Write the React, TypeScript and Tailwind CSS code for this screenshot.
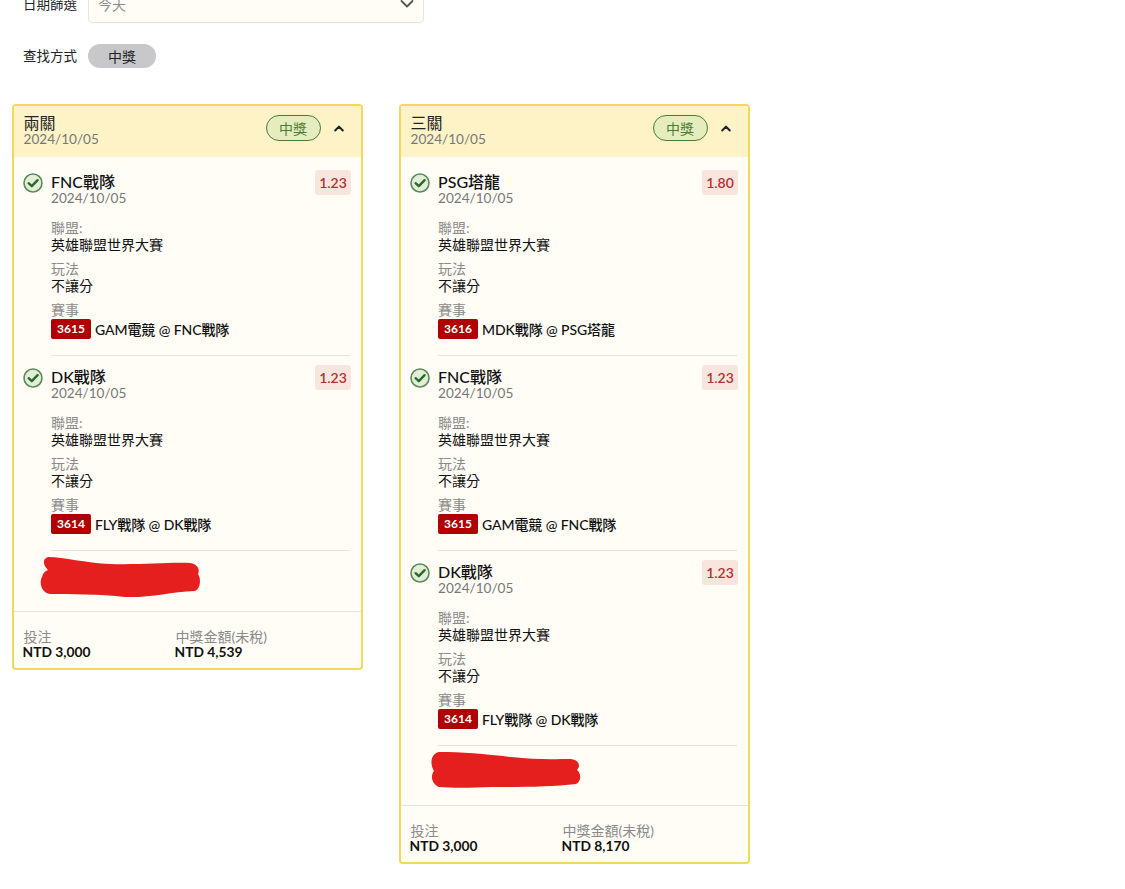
function Check() {
  return (
    <svg width="20" height="20" viewBox="0 0 20 20" className="shrink-0">
      <circle cx="10" cy="10" r="9" fill="#e3eed9" stroke="#5b8a58" strokeWidth="1.6" />
      <path d="M5.6 10.2 L8.8 13.2 L14.6 7.2" fill="none" stroke="#2c6a2c" strokeWidth="2.4" strokeLinecap="round" strokeLinejoin="round" />
    </svg>
  );
}

function Info({ label, value }: { label: string; value: string }) {
  return (
    <div className="mb-[7px]">
      <div className="text-[14px] leading-[17px] text-[#8a8a8a]">{label}</div>
      <div className="text-[14px] leading-[17px] text-[#111]">{value}</div>
    </div>
  );
}

type Sel = { name: string; odds: string; id: string; match: string };

function Row({ s }: { s: Sel }) {
  return (
    <div className="border-b border-[#e6e4dc] ml-[37px] mr-[11px] h-[195px] relative">
      <div className="absolute left-[-28px] top-[12px]"><Check /></div>
      <div className="pt-[12px]">
        <div className="flex justify-between mr-[-1.5px]">
          <div>
            <div className="text-[16px] leading-[17px] font-medium text-[#111]">{s.name}</div>
            <div className="text-[13.6px] leading-[16px] text-[#777]">2024/10/05</div>
          </div>
          <div className="w-[36px] h-[25px] rounded-[3px] bg-[#f8e6de] text-[#b3312f] text-[14px] font-semibold flex items-center justify-center mt-[-3px]">{s.odds}</div>
        </div>
        <div className="mt-[13px]">
          <Info label="聯盟:" value="英雄聯盟世界大賽" />
          <Info label="玩法" value="不讓分" />
          <div className="text-[14px] leading-[17px] text-[#8a8a8a]">賽事</div>
          <div className="flex items-center gap-[4px] h-[20px] mt-[1px]">
            <span className="w-[40px] h-[20px] rounded-[2px] bg-[#b00000] text-white text-[12px] font-bold flex items-center justify-center">{s.id}</span>
            <span className="text-[14px] font-medium text-[#111] tracking-[-0.1px]">{s.match}</span>
          </div>
        </div>
      </div>
    </div>
  );
}

function Card({ title, rows, amount, scribble, scribbleClass, sectionClass }: { title: string; rows: Sel[]; amount: string; scribble: string; scribbleClass: string; sectionClass: string }) {
  return (
    <div className="w-[350.5px] border-2 border-[#f2d95c] rounded-[4px] bg-[#fffdf6]">
      <div className="h-[51px] bg-[#fdf3c7] pl-[9.5px] pr-[14px] flex justify-between">
        <div className="pt-[8px]">
          <div className="text-[16px] leading-[17px] text-[#222]">{title}</div>
          <div className="text-[13.6px] leading-[16px] text-[#777]">2024/10/05</div>
        </div>
        <div className="flex items-start gap-[12px] pt-[9px]">
          <div className="w-[55px] h-[26px] rounded-full border border-[#4c7c34] bg-[#e5ecbe] text-[#4c7c34] text-[14px] flex items-center justify-center">中獎</div>
          <svg width="12" height="26" viewBox="0 0 12 26" className="mr-[2px]">
            <path d="M2.2 15.5 L6 11.6 L9.8 15.5" fill="none" stroke="#222" strokeWidth="2" strokeLinecap="round" strokeLinejoin="round" />
          </svg>
        </div>
      </div>
      <div className="pt-[4px]">
        {rows.map((r) => <Row key={r.id} s={r} />)}
      </div>
      <div className={sectionClass}>
        <svg width="162" height="42" viewBox="0 0 162 42" className={scribbleClass}>
          <path d={scribble} fill="#e51e1e" />
        </svg>
      </div>
      <div className="h-[56px] pl-[9.5px] pt-[17px] flex">
        <div className="w-[152px]">
          <div className="text-[14px] leading-[15px] text-[#8a8a8a]">投注</div>
          <div className="text-[13.8px] leading-[15px] font-bold text-[#111] ml-[-1px]">NTD 3,000</div>
        </div>
        <div>
          <div className="text-[14px] leading-[15px] text-[#8a8a8a]">中獎金額(未稅)</div>
          <div className="text-[13.8px] leading-[15px] font-bold text-[#111] ml-[-1px]">{amount}</div>
        </div>
      </div>
    </div>
  );
}

const FNC = { name: "FNC戰隊", odds: "1.23", id: "3615", match: "GAM電競 @ FNC戰隊" };
const DK = { name: "DK戰隊", odds: "1.23", id: "3614", match: "FLY戰隊 @ DK戰隊" };
const PSG = { name: "PSG塔龍", odds: "1.80", id: "3616", match: "MDK戰隊 @ PSG塔龍" };

const S1 = "M8 1 C24 1 45 7 70 8 C100 9 130 6 150 7 C158 8 160 14 158 18 C161 22 161 32 155 35 C130 36 110 42 85 41 C60 38 30 38 10 38 C1 37 -1 26 2 21 C3 17 5 15 8 14 C3 9 2 3 8 1 Z";
const S2 = "M8 1 C30 1 55 3 80 6 C105 9 125 8 140 8 C148 9 150 15 146 19 C150 22 151 30 145 33 C120 36 90 36 60 36 C40 37 20 37 8 36 C1 33 -1 25 3 20 C-1 14 -1 3 8 1 Z";

export default function App() {
  return (
    <div className="min-h-[889px] bg-white text-[#222] font-['Lato','Noto_Sans_CJK_TC',sans-serif]">
      <div className="flex items-center mt-[-15px] pl-[23px] relative">
        <span className="w-[65px] text-[13.5px]">日期篩選</span>
        <div className="w-[336px] h-[38px] border border-[#e8e6dc] rounded-[4px] bg-[#fffdf6] flex items-center justify-between pl-[9px] pr-[8px] text-[14px] text-[#8a8a8a]">
          今天
          <svg width="16" height="16" viewBox="0 0 16 16">
            <path d="M2.5 5 L8 10.5 L13.5 5" fill="none" stroke="#555" strokeWidth="1.8" strokeLinecap="round" strokeLinejoin="round" />
          </svg>
        </div>
      </div>
      <div className="flex items-center mt-[21px] pl-[23px]">
        <span className="w-[65px] text-[13.5px]">查找方式</span>
        <div className="w-[68px] h-[24px] rounded-full bg-[#c8c8ca] text-[14px] flex items-center justify-center">中獎</div>
      </div>
      <div className="flex items-start gap-[36.5px] pl-[12px] mt-[36px]">
        <Card title="兩關" rows={[FNC, DK]} amount="NTD 4,539" scribble={S1} scribbleClass="ml-[26px]" sectionClass="h-[61px] border-b border-[#e6e4dc] pt-[5px]" />
        <Card title="三關" rows={[PSG, FNC, DK]} amount="NTD 8,170" scribble={S2} scribbleClass="ml-[30px]" sectionClass="h-[60px] border-b border-[#e6e4dc] pt-[5px]" />
      </div>
    </div>
  );
}
